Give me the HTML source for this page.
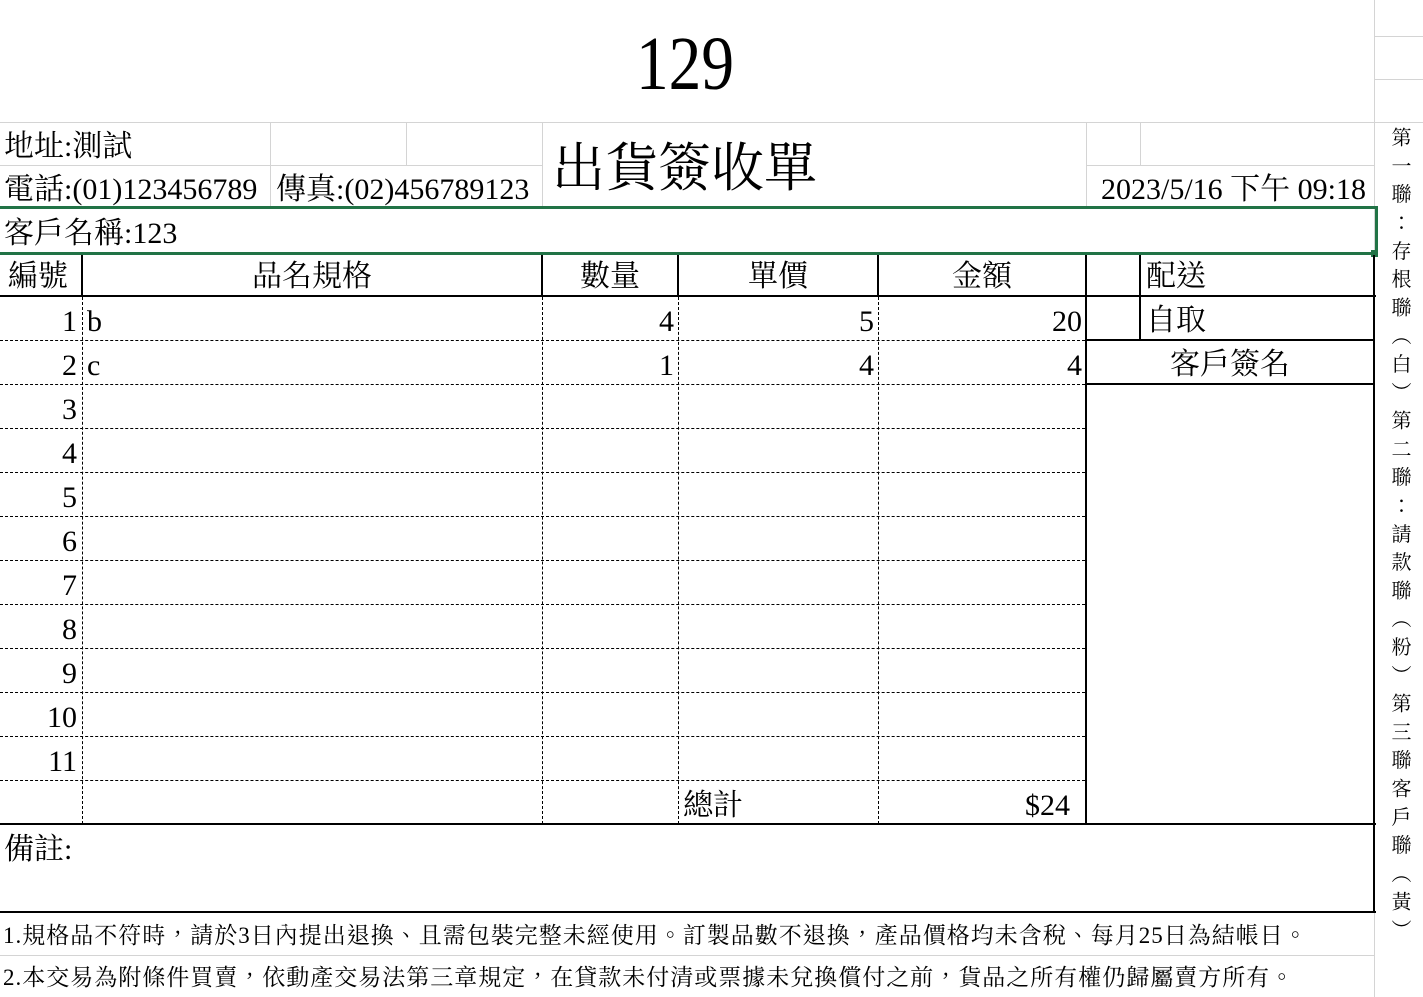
<!DOCTYPE html>
<html><head><meta charset="utf-8"><style>
*{margin:0;padding:0;box-sizing:border-box}
body{width:1423px;height:997px;background:#fff;position:relative;overflow:hidden;font-family:"Liberation Serif","Noto Serif CJK TC","Noto Serif CJK SC",serif;color:#000}
.h{position:absolute;height:0}
.v{position:absolute;width:0}
.g{border-top:1px solid #d4d4d4}
.gv{border-left:1px solid #d4d4d4}
.s{border-top:2px solid #000}
.sv{border-left:2px solid #000}
.d{border-top:1px dashed #000}
.dv{border-left:1px dashed #000}
.t{position:absolute;white-space:nowrap;line-height:1;font-size:30px}
.r{text-align:right}
.c{text-align:center}
</style></head><body>
<div class="h g" style="left:0;top:122px;width:1423px"></div>
<div class="h g" style="left:0;top:165px;width:542px"></div>
<div class="h g" style="left:1086px;top:165px;width:288px"></div>
<div class="v gv" style="left:270px;top:122px;height:85px"></div>
<div class="v gv" style="left:406px;top:122px;height:43px"></div>
<div class="v gv" style="left:542px;top:122px;height:85px"></div>
<div class="v gv" style="left:1086px;top:122px;height:85px"></div>
<div class="v gv" style="left:1140px;top:122px;height:43px"></div>
<div class="v gv" style="left:1374px;top:0;height:997px"></div>
<div class="h g" style="left:1374px;top:36px;width:49px"></div>
<div class="h g" style="left:1374px;top:79px;width:49px"></div>
<div class="h g" style="left:0;top:955px;width:1374px"></div>
<div style="position:absolute;left:0;top:206px;width:1378px;height:49px;border:3px solid #217346;border-left:none"></div>
<div style="position:absolute;left:1371px;top:250px;width:7px;height:7px;background:#217346"></div>
<div class="h s" style="left:0;top:295px;width:1376px"></div>
<div class="v sv" style="left:81px;top:255px;height:41px"></div>
<div class="v sv" style="left:541px;top:255px;height:41px"></div>
<div class="v sv" style="left:677px;top:255px;height:41px"></div>
<div class="v sv" style="left:877px;top:255px;height:41px"></div>
<div class="v sv" style="left:1085px;top:255px;height:570px"></div>
<div class="v sv" style="left:1139px;top:255px;height:85px"></div>
<div class="v sv" style="left:1373px;top:255px;height:658px"></div>
<div class="h s" style="left:1085px;top:339px;width:290px"></div>
<div class="h s" style="left:1085px;top:383px;width:290px"></div>
<div class="h s" style="left:0;top:823px;width:1376px"></div>
<div class="h s" style="left:0;top:911px;width:1376px"></div>
<div class="v dv" style="left:82px;top:297px;height:527px"></div>
<div class="v dv" style="left:542px;top:297px;height:527px"></div>
<div class="v dv" style="left:678px;top:297px;height:527px"></div>
<div class="v dv" style="left:878px;top:297px;height:527px"></div>
<div class="h d" style="left:0;top:340px;width:1085px"></div>
<div class="h d" style="left:0;top:384px;width:1085px"></div>
<div class="h d" style="left:0;top:428px;width:1085px"></div>
<div class="h d" style="left:0;top:472px;width:1085px"></div>
<div class="h d" style="left:0;top:516px;width:1085px"></div>
<div class="h d" style="left:0;top:560px;width:1085px"></div>
<div class="h d" style="left:0;top:604px;width:1085px"></div>
<div class="h d" style="left:0;top:648px;width:1085px"></div>
<div class="h d" style="left:0;top:692px;width:1085px"></div>
<div class="h d" style="left:0;top:736px;width:1085px"></div>
<div class="h d" style="left:0;top:780px;width:1085px"></div>
<div class="t" style="left:636px;top:26px;font-size:76px;transform:scaleX(.86);transform-origin:left">129</div>
<div class="t" style="left:4px;top:132px">地址:測試</div>
<div class="t" style="left:4px;top:175px">電話:(01)123456789</div>
<div class="t" style="left:276px;top:175px">傳真:(02)456789123</div>
<div class="t" style="left:552px;top:143px;font-size:53px">出貨簽收單</div>
<div class="t" style="left:1101px;top:175px">2023/5/16 下午 09:18</div>
<div class="t" style="left:4px;top:219px">客戶名稱:123</div>
<div class="t" style="left:8px;top:262px">編號</div>
<div class="t c" style="left:82px;top:262px;width:460px">品名規格</div>
<div class="t c" style="left:542px;top:262px;width:136px">數量</div>
<div class="t c" style="left:678px;top:262px;width:200px">單價</div>
<div class="t c" style="left:878px;top:262px;width:208px">金額</div>
<div class="t" style="left:1146px;top:262px">配送</div>
<div class="t" style="left:1146px;top:306px">自取</div>
<div class="t c" style="left:1086px;top:350px;width:288px">客戶簽名</div>
<div class="t r" style="left:0;top:307px;width:77px">1</div>
<div class="t r" style="left:0;top:351px;width:77px">2</div>
<div class="t r" style="left:0;top:395px;width:77px">3</div>
<div class="t r" style="left:0;top:439px;width:77px">4</div>
<div class="t r" style="left:0;top:483px;width:77px">5</div>
<div class="t r" style="left:0;top:527px;width:77px">6</div>
<div class="t r" style="left:0;top:571px;width:77px">7</div>
<div class="t r" style="left:0;top:615px;width:77px">8</div>
<div class="t r" style="left:0;top:659px;width:77px">9</div>
<div class="t r" style="left:0;top:703px;width:77px">10</div>
<div class="t r" style="left:0;top:747px;width:77px">11</div>
<div class="t" style="left:87px;top:307px">b</div>
<div class="t" style="left:87px;top:351px">c</div>
<div class="t r" style="left:542px;top:307px;width:132px">4</div>
<div class="t r" style="left:542px;top:351px;width:132px">1</div>
<div class="t r" style="left:678px;top:307px;width:196px">5</div>
<div class="t r" style="left:678px;top:351px;width:196px">4</div>
<div class="t r" style="left:878px;top:307px;width:204px">20</div>
<div class="t r" style="left:878px;top:351px;width:204px">4</div>
<div class="t" style="left:683px;top:791px">總計</div>
<div class="t r" style="left:878px;top:791px;width:192px">$24</div>
<div class="t" style="left:4px;top:835px">備註:</div>
<div class="t" style="left:3px;top:924px;font-size:23px;letter-spacing:1px">1.規格品不符時，請於3日內提出退換、且需包裝完整未經使用。訂製品數不退換，產品價格均未含稅、每月25日為結帳日。</div>
<div class="t" style="left:3px;top:966px;font-size:23px;letter-spacing:1px">2.本交易為附條件買賣，依動產交易法第三章規定，在貸款未付清或票據未兌換償付之前，貨品之所有權仍歸屬賣方所有。</div>
<div style="position:absolute;left:1389px;top:127px;writing-mode:vertical-rl;font-size:20px;letter-spacing:8.3px;line-height:1;white-space:nowrap">第一聯：存根聯（白）第二聯：請款聯（粉）第三聯客戶聯（黃）</div>
</body></html>
